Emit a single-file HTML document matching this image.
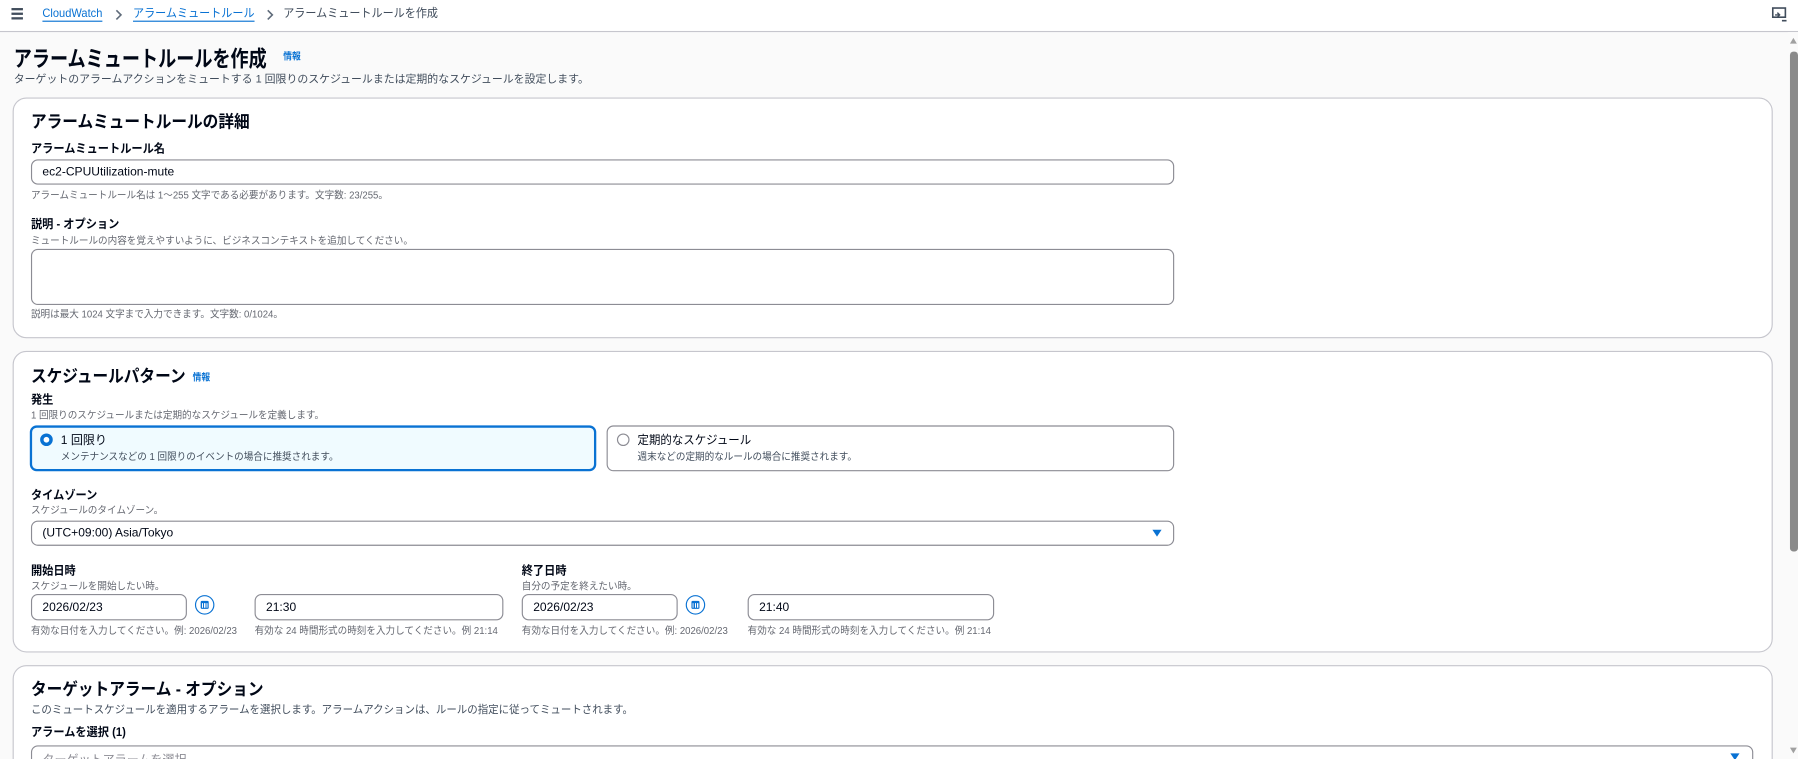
<!DOCTYPE html>
<html><head><meta charset="utf-8"><style>
html,body{margin:0;padding:0;width:1798px;height:759px;overflow:hidden;background:#fafafa}
#w{position:absolute;left:0;top:0;width:1568px;height:662px;overflow:hidden;transform:scale(1.14668);transform-origin:0 0;font-family:"Liberation Sans","Noto Sans CJK JP",sans-serif;color:#000716;background:#fafafa}
.a{position:absolute;white-space:nowrap}
.hdr{position:absolute;left:0;top:0;width:1568px;height:27px;background:#fff;border-bottom:1px solid #c6c6cd}
.bc{position:absolute;top:6px;font-size:10.5px;line-height:13px;white-space:nowrap;transform:scaleX(.92);transform-origin:0 0}
.lnk{color:#0972d3;text-decoration:underline;text-underline-offset:3px}
.panel{position:absolute;left:11px;width:1533px;background:#fff;border:1px solid #c6c6cd;border-radius:12px}
.h1{font-size:19.5px;font-weight:bold;transform:scaleX(.81);transform-origin:0 0}
.h2{font-size:15px;font-weight:bold;transform:scaleX(.91);transform-origin:0 0}
.lb{font-size:10.5px;font-weight:bold;transform:scaleX(.93);transform-origin:0 0}
.ds{font-size:8.8px;color:#656871;transform:scaleX(.95);transform-origin:0 0}
.sub{font-size:9.5px;color:#414d5c;transform:scaleX(1.0);transform-origin:0 0}
.in{position:absolute;border:1px solid #8c8c94;border-radius:6px;background:#fff;box-sizing:border-box;font-size:10.5px;padding-left:9px;display:flex;align-items:center}
.info{font-size:8.5px;color:#0972d3;font-weight:bold;transform:scaleX(.9);transform-origin:0 0}
.cal{position:absolute;width:17px;height:17px;border:1.3px solid #0972d3;border-radius:50%;box-sizing:border-box;background:#fff}
.cal i{position:absolute;left:4px;top:4px;width:7px;height:7px;background:#0972d3;border-radius:1px}
.cal i:after{content:"";position:absolute;left:1px;top:2px;width:5px;height:4px;background:repeating-linear-gradient(90deg,#fff 0 1px,transparent 1px 2px)}
.caret{position:absolute;width:0;height:0;border-left:4px solid transparent;border-right:4px solid transparent;border-top:6px solid #0972d3}
</style></head><body><div id="w">
<div class="hdr">
 <div class="a" style="left:10px;top:6px;width:10px;">
  <div style="height:1.5px;background:#414d5c;margin-top:1px"></div><div style="height:1.5px;background:#414d5c;margin-top:2.5px"></div><div style="height:1.5px;background:#414d5c;margin-top:2.5px"></div></div>
 <div class="bc lnk" style="left:37px">CloudWatch</div>
 <svg class="a" style="left:100px;top:8px" width="7" height="10" viewBox="0 0 7 10"><path d="M1.5 1l4 4-4 4" stroke="#5f6b7a" stroke-width="1.4" fill="none"/></svg>
 <div class="bc lnk" style="left:116px">アラームミュートルール</div>
 <svg class="a" style="left:232px;top:8px" width="7" height="10" viewBox="0 0 7 10"><path d="M1.5 1l4 4-4 4" stroke="#5f6b7a" stroke-width="1.4" fill="none"/></svg>
 <div class="bc" style="left:247px;color:#414d5c">アラームミュートルールを作成</div>
 <svg class="a" style="left:1545px;top:6px" width="14" height="14" viewBox="0 0 14 14"><rect x="1" y="1" width="11" height="8" fill="none" stroke="#414d5c" stroke-width="1.4"/><path d="M3 7h4M5 5l2 2-2 2" stroke="#414d5c" fill="none" stroke-width="1.2"/><path d="M9 12h4" stroke="#414d5c" stroke-width="1.4"/></svg>
</div>
<div class="a h1" style="left:12px;top:35px">アラームミュートルールを作成</div>
<div class="a info" style="left:247px;top:43px">情報</div>
<div class="a sub" style="left:12px;top:61px">ターゲットのアラームアクションをミュートする 1 回限りのスケジュールまたは定期的なスケジュールを設定します。</div>

<div class="panel" style="top:85px;height:208px"></div>
<div class="a h2" style="left:27px;top:95px">アラームミュートルールの詳細</div>
<div class="a lb" style="left:27px;top:122px">アラームミュートルール名</div>
<div class="in" style="left:27px;top:139px;width:997px;height:22px">ec2-CPUUtilization-mute</div>
<div class="a ds" style="left:27px;top:163px">アラームミュートルール名は 1～255 文字である必要があります。文字数: 23/255。</div>
<div class="a lb" style="left:27px;top:188px">説明 - オプション</div>
<div class="a ds" style="left:27px;top:203px">ミュートルールの内容を覚えやすいように、ビジネスコンテキストを追加してください。</div>
<div class="in" style="left:27px;top:217px;width:997px;height:49px"></div>
<div class="a ds" style="left:27px;top:267px">説明は最大 1024 文字まで入力できます。文字数: 0/1024。</div>

<div class="panel" style="top:306px;height:261px"></div>
<div class="a h2" style="left:27px;top:317px">スケジュールパターン</div>
<div class="a info" style="left:168px;top:323px">情報</div>
<div class="a lb" style="left:27px;top:341px">発生</div>
<div class="a ds" style="left:27px;top:355px">1 回限りのスケジュールまたは定期的なスケジュールを定義します。</div>
<div class="a" style="left:26px;top:371px;width:494px;height:40px;border:2px solid #0972d3;border-radius:6px;background:#f0fbff;box-sizing:border-box"></div>
<div class="a" style="left:35px;top:378px;width:11px;height:11px;border-radius:50%;border:3.5px solid #0972d3;box-sizing:border-box;background:#fff"></div>
<div class="a" style="left:53px;top:376px;font-size:10.5px">1 回限り</div>
<div class="a ds" style="left:53px;top:391px;color:#414d5c">メンテナンスなどの 1 回限りのイベントの場合に推奨されます。</div>
<div class="a" style="left:529px;top:371px;width:495px;height:40px;border:1px solid #8c8c94;border-radius:6px;background:#fff;box-sizing:border-box"></div>
<div class="a" style="left:538px;top:378px;width:11px;height:11px;border-radius:50%;border:1px solid #8c8c94;box-sizing:border-box;background:#fff"></div>
<div class="a" style="left:556px;top:376px;font-size:10.5px;transform:scaleX(.95);transform-origin:0 0">定期的なスケジュール</div>
<div class="a ds" style="left:556px;top:391px;color:#414d5c">週末などの定期的なルールの場合に推奨されます。</div>
<div class="a lb" style="left:27px;top:424px">タイムゾーン</div>
<div class="a ds" style="left:27px;top:438px">スケジュールのタイムゾーン。</div>
<div class="in" style="left:27px;top:454px;width:997px;height:22px">(UTC+09:00) Asia/Tokyo</div>
<div class="caret" style="left:1005px;top:462px"></div>
<div class="a lb" style="left:27px;top:490px">開始日時</div>
<div class="a ds" style="left:27px;top:504px">スケジュールを開始したい時。</div>
<div class="in" style="left:27px;top:518px;width:136px;height:23px">2026/02/23</div>
<div class="cal" style="left:170px;top:519px"><i></i></div>
<div class="in" style="left:222px;top:518px;width:217px;height:23px">21:30</div>
<div class="a ds" style="left:27px;top:543px">有効な日付を入力してください。例: 2026/02/23</div>
<div class="a ds" style="left:222px;top:543px">有効な 24 時間形式の時刻を入力してください。例 21:14</div>
<div class="a lb" style="left:455px;top:490px">終了日時</div>
<div class="a ds" style="left:455px;top:504px">自分の予定を終えたい時。</div>
<div class="in" style="left:455px;top:518px;width:136px;height:23px">2026/02/23</div>
<div class="cal" style="left:598px;top:519px"><i></i></div>
<div class="in" style="left:652px;top:518px;width:215px;height:23px">21:40</div>
<div class="a ds" style="left:455px;top:543px">有効な日付を入力してください。例: 2026/02/23</div>
<div class="a ds" style="left:652px;top:543px">有効な 24 時間形式の時刻を入力してください。例 21:14</div>

<div class="panel" style="top:580px;height:200px"></div>
<div class="a h2" style="left:27px;top:590px">ターゲットアラーム - オプション</div>
<div class="a sub" style="left:27px;top:611px;transform:scaleX(.96)">このミュートスケジュールを適用するアラームを選択します。アラームアクションは、ルールの指定に従ってミュートされます。</div>
<div class="a lb" style="left:27px;top:631px">アラームを選択 (1)</div>
<div class="in" style="left:27px;top:650px;width:1502px;height:22px;align-items:flex-start;padding-top:4px;color:#8c8c94">ターゲットアラームを選択</div>
<div class="caret" style="left:1509px;top:657px"></div>

<div class="a" style="left:1559px;top:28px;width:9px;height:634px;background:#fafafa"></div>
<div class="a" style="left:1561px;top:33px;width:0;height:0;border-left:3.5px solid transparent;border-right:3.5px solid transparent;border-bottom:5px solid #a0a0a0"></div>
<div class="a" style="left:1561px;top:45px;width:7px;height:436px;background:#8a8a8a;border-radius:3px"></div>
<div class="a" style="left:1561px;top:652px;width:0;height:0;border-left:3.5px solid transparent;border-right:3.5px solid transparent;border-top:5px solid #a0a0a0"></div>
</div></body></html>
